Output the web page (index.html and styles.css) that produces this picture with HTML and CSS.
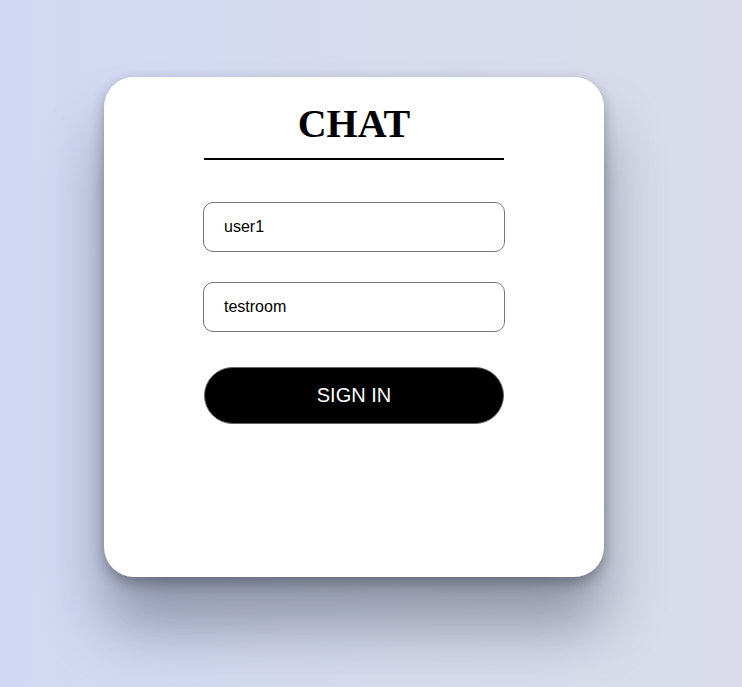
FILE: index.html
```html
<!DOCTYPE html>
<html lang="en">
<head>
<meta charset="utf-8">
<title>Chat</title>
<link rel="stylesheet" href="styles.css">
</head>
<body>
  <main class="card">
    <h1 class="title">CHAT</h1>
    <form class="form">
      <input class="field" type="text" value="user1">
      <input class="field" type="text" value="testroom">
      <button class="btn" type="button">SIGN IN</button>
    </form>
  </main>
</body>
</html>
```

FILE: styles.css
```css
html, body {
  margin: 0;
  height: 100%;
}
body {
  background: linear-gradient(90deg, #d0d8f3 0%, #d6dbee 50%, #d9dce8 100%);
  padding: 77px 0 0 104px;
  box-sizing: border-box;
  overflow: hidden;
}
.card {
  width: 500px;
  height: 500px;
  background: #fff;
  border-radius: 30px;
  box-shadow: 0 50px 60px rgba(20, 24, 45, 0.36), 0 6px 14px rgba(0, 0, 0, 0.3);
  padding-top: 24px;
  box-sizing: border-box;
  display: flex;
  flex-direction: column;
  align-items: center;
}
.title {
  margin: 0;
  width: 300px;
  font-family: "Liberation Serif", "Times New Roman", serif;
  font-size: 40px;
  line-height: 46px;
  font-weight: bold;
  text-align: center;
  padding-bottom: 11px;
  border-bottom: 2px solid #000;
}
.form {
  display: flex;
  flex-direction: column;
  align-items: center;
  margin-top: 42px;
}
.field {
  box-sizing: border-box;
  width: 302px;
  height: 50px;
  border: 1px solid #767676;
  border-radius: 10px;
  padding: 0 20px;
  font-family: "Liberation Sans", Arial, sans-serif;
  font-size: 16px;
  color: #000;
  background: #fff;
  margin-bottom: 30px;
  outline: none;
}
.btn {
  box-sizing: border-box;
  margin-top: 5px;
  width: 300px;
  height: 57px;
  border: 1px solid #666;
  border-radius: 29px;
  background: #000;
  color: #fff;
  font-family: "Liberation Sans", Arial, sans-serif;
  font-size: 20px;
  cursor: pointer;
}
```
